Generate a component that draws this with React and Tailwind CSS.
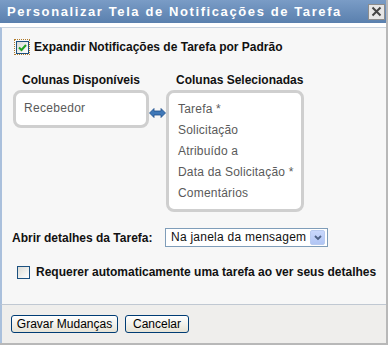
import React, { useState } from "react";

const font = { fontFamily: '"Liberation Sans", Arial, sans-serif' };

const Check = ({ checked, focus }) => (
  <span
    className={`flex h-[14px] w-[14px] items-center justify-center ${
      focus ? "outline-1 outline-dotted outline-[#b07a2a]" : ""
    }`}
  >
    <span className="flex h-[13px] w-[13px] items-center justify-center border border-[#1c5180] bg-gradient-to-br from-[#dcdcd6] to-white">
      {checked && (
        <svg width="9" height="9" viewBox="0 0 9 9">
          <path d="M1 4.5 L3.5 7 L8 2" fill="none" stroke="#21a121" strokeWidth="2" />
        </svg>
      )}
    </span>
  </span>
);

const SwapArrow = () => (
  <svg width="17" height="10" viewBox="0 0 17 10">
    <path
      d="M0.5 5 L5 0.5 L5 3 L12 3 L12 0.5 L16.5 5 L12 9.5 L12 7 L5 7 L5 9.5 Z"
      fill="#3f78b8"
      stroke="#1f4f8a"
      strokeWidth="0.8"
    />
  </svg>
);

const XpButton = ({ children, className }) => (
  <button
    className={`h-[18px] rounded-[3px] border border-[#003c74] bg-gradient-to-b from-white to-[#e6e3d6] text-[12px] leading-[16px] text-black ${className}`}
  >
    {children}
  </button>
);

export default function App() {
  const [expand, setExpand] = useState(true);
  const [requerer, setRequerer] = useState(false);
  const selected = [
    "Tarefa *",
    "Solicitação",
    "Atribuído a",
    "Data da Solicitação *",
    "Comentários",
  ];

  return (
    <div
      style={font}
      className="flex h-[345px] w-[388px] flex-col border-b-2 border-r-2 border-[#b8b8b8] bg-white"
    >
      {/* barra de título */}
      <div className="flex h-[23px] items-center justify-between bg-gradient-to-b from-[#7a9cc6] to-[#5a80ae] pl-[7px] pr-[1px]">
        <span className="whitespace-nowrap text-[13px] font-bold tracking-[1.6px] text-white">
          Personalizar Tela de Notificações de Tarefa
        </span>
        <span className="flex h-[16px] w-[17px] items-center justify-center border border-[#8c8c8c] bg-[#e6e6e6]">
          <svg width="11" height="11" viewBox="0 0 11 11">
            <path d="M1.5 1.5 L9.5 9.5 M9.5 1.5 L1.5 9.5" stroke="#444" strokeWidth="2" />
          </svg>
        </span>
      </div>
      <div className="h-[4px] bg-white" />

      {/* corpo */}
      <div className="flex flex-1 flex-col border-l-2 border-t border-[#aac0dc] border-t-[#c9d3de] bg-[#f7f7f7] text-[12px]">
        <label
          className="ml-[13px] mt-[12px] flex cursor-pointer items-center gap-[5px] font-bold text-[#111]"
          onClick={() => setExpand(!expand)}
        >
          <Check checked={expand} focus />
          <span className="leading-[14px]">Expandir Notificações de Tarefa por Padrão</span>
        </label>

        <div className="ml-[11px] mt-[19px] flex items-start">
          <div className="flex flex-col">
            <span className="pl-[9px] font-bold leading-[14px] text-[#111]">
              Colunas Disponíveis
            </span>
            <div className="mt-[3px] h-[38px] w-[136px] rounded-[8px] border-[3px] border-[#cfcfcf] bg-white pl-[8px] pt-[8px] leading-[15px] tracking-[0.3px] text-[#5a5a5a]">
              Recebedor
            </div>
          </div>
          <div className="mt-[35px] flex w-[17px] justify-center">
            <SwapArrow />
          </div>
          <div className="flex flex-col">
            <span className="pl-[10px] font-bold leading-[14px] text-[#111]">
              Colunas Selecionadas
            </span>
            <div className="mt-[3px] h-[122px] w-[138px] rounded-[8px] border-[3px] border-[#cfcfcf] bg-white pl-[9px] pt-[6px] tracking-[0.2px] text-[#5a5a5a]">
              {selected.map((item) => (
                <div key={item} className="leading-[21px]">
                  {item}
                </div>
              ))}
            </div>
          </div>
        </div>

        <div className="ml-[10px] mt-[16px] flex items-center">
          <span className="w-[153px] font-bold text-[#111]">Abrir detalhes da Tarefa:</span>
          <div className="flex h-[19px] w-[163px] items-center justify-between border border-[#7f9db9] bg-white pl-[5px] pr-[2px]">
            <span className="whitespace-nowrap text-[12px] leading-[15px] tracking-[0.25px] text-[#111]">
              Na janela da mensagem
            </span>
            <span className="flex h-[15px] w-[15px] items-center justify-center rounded-[2px] border border-[#b9cbf0] bg-gradient-to-b from-[#c9d8fc] to-[#b1c5f4]">
              <svg width="8" height="6" viewBox="0 0 8 6">
                <path d="M1 1 L4 4 L7 1" fill="none" stroke="#4d6185" strokeWidth="1.8" />
              </svg>
            </span>
          </div>
        </div>

        <label
          className="ml-[14px] mt-[18px] flex cursor-pointer items-center gap-[6px] font-bold text-[#111]"
          onClick={() => setRequerer(!requerer)}
        >
          <Check checked={requerer} />
          <span className="leading-[14px]">
            Requerer automaticamente uma tarefa ao ver seus detalhes
          </span>
        </label>
      </div>

      {/* rodapé */}
      <div className="flex h-[39px] items-center gap-[7px] border-l-2 border-t border-[#aac0dc] border-t-[#c0c8d2] bg-[#efeeec] pl-[9px]">
        <XpButton className="w-[107px]">Gravar Mudanças</XpButton>
        <XpButton className="w-[64px]">Cancelar</XpButton>
      </div>
    </div>
  );
}
